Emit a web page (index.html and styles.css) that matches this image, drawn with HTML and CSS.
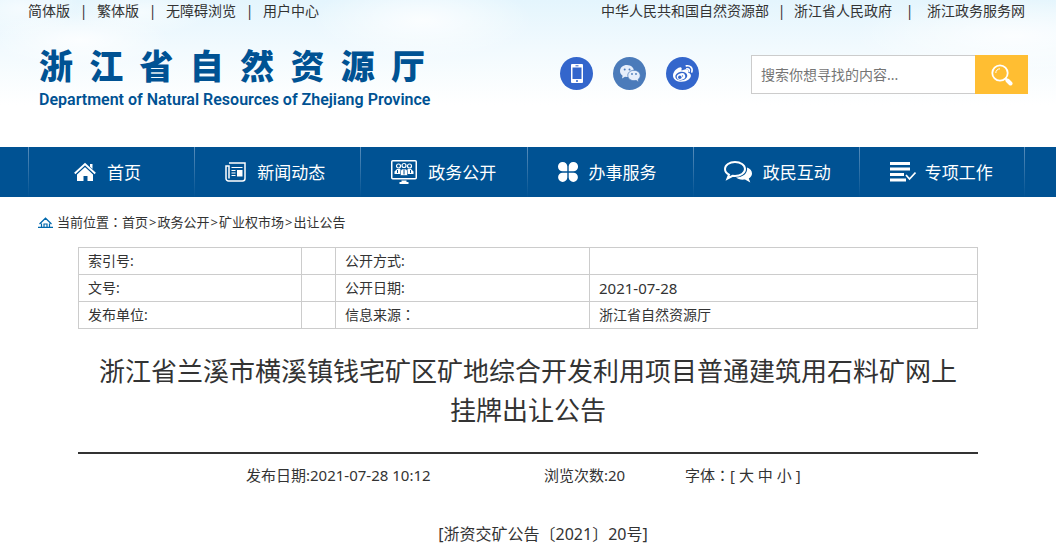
FILE: index.html
```html
<!DOCTYPE html>
<html lang="zh-CN">
<head>
<meta charset="utf-8">
<meta name="viewport" content="width=device-width, initial-scale=1">
<title>浙江省自然资源厅</title>
<link rel="stylesheet" href="styles.css">
</head>
<body>
<header class="header">
  <div class="container">
    <div class="topbar">
      <div class="topbar-group">
        <a href="#">简体版</a><span>|</span><a href="#">繁体版</a><span>|</span><a href="#">无障碍浏览</a><span>|</span><a href="#">用户中心</a>
      </div>
      <div class="topbar-group">
        <a href="#">中华人民共和国自然资源部</a><span class="narrow">|</span><a href="#">浙江省人民政府</a><span class="wide">|</span><a href="#">浙江政务服务网</a>
      </div>
    </div>
    <div class="brand-row">
      <a class="brand" href="#">
        <span class="brand-name">浙江省自然资源厅</span>
        <span class="brand-en">Department of Natural Resources of Zhejiang Province</span>
      </a>
      <div class="social">
        <a href="#" aria-label="手机版">
          <svg width="33" height="33" viewBox="0 0 33 33"><circle cx="16.500" cy="16.500" r="16.500" fill="#3366cc"/><rect x="11" y="7" width="12" height="19" rx="1" fill="#fff"/><rect x="12.500" y="10.500" width="9" height="11.500" fill="#3366cc"/><circle cx="17" cy="24" r="1" fill="#3366cc"/><path d="M15.500 8.800h3" stroke="#3366cc"/></svg>
        </a>
        <a href="#" aria-label="微信">
          <svg width="33" height="33" viewBox="0 0 33 33"><circle cx="16.500" cy="16.500" r="16.500" fill="#4b7bba"/><path d="M14 8c-4 0-7 2.600-7 6 0 2 1 3.600 2.600 4.700L9 21.500l3-1.700 2 .3c4 0 7-2.700 7-6S18 8 14 8z" fill="#e6eefb"/><path d="M21 13.300c-3.600 0-6.200 2.300-6.200 5.200s2.700 5.200 6.200 5.200l2-.3 2.900 1.500-.7-2.500c1.300-1 2-2.300 2-3.900 0-2.900-2.700-5.200-6.200-5.200z" fill="#e6eefb" stroke="#4b7bba" stroke-width=".8"/><g fill="#4b7bba"><circle cx="11.700" cy="12.500" r="1"/><circle cx="16.500" cy="12.500" r="1"/><circle cx="19" cy="17" r=".9"/><circle cx="23" cy="17" r=".9"/></g></svg>
        </a>
        <a href="#" aria-label="微博">
          <svg width="33" height="33" viewBox="0 0 33 33"><circle cx="16.500" cy="16.500" r="16.500" fill="#3366cc"/><path d="M15.500 12.500c.8-2-.5-3-3-1.800C9.500 12.200 7 15.500 7 18.700c0 3.700 4 6.100 8.600 6.100 5.400 0 9.300-3.200 9.300-6.200 0-2-1.600-2.800-2.800-3.200.9-2.400-.5-3.400-3.200-3-1.200.2-2.300.7-3.400 1z" fill="#fff"/><ellipse cx="15.300" cy="19.100" rx="6" ry="4.300" transform="rotate(-8 15.300 19.100)" fill="#3366cc"/><ellipse cx="15" cy="19.600" rx="4.300" ry="3.300" transform="rotate(-15 15 19.600)" fill="#fff"/><circle cx="13.800" cy="20.300" r="1.700" fill="#3366cc"/><circle cx="16.500" cy="18.900" r=".7" fill="#3366cc"/><path d="M20.300 8.900c3.800-.9 6.800 2.200 5.500 6M20.800 11.800c1.800-.3 3 .9 2.400 2.500" fill="none" stroke="#fff" stroke-width="1.600" stroke-linecap="round"/></svg>
        </a>
      </div>
      <form class="search">
        <input type="text" aria-label="搜索" placeholder="搜索你想寻找的内容...">
        <button type="button" aria-label="搜索">
          <svg width="22" height="22" viewBox="0 0 22 22" fill="none" stroke="#fff"><circle cx="9" cy="9" r="7.700" stroke-width="1.800"/><path d="M4.800 9A4.200 4.200 0 0 1 9 4.800" stroke-width="1"/><path d="M14.500 14.500l2 2" stroke-width="2"/><path d="M16.500 16.500l3 3" stroke-width="4" stroke-linecap="round"/></svg>
        </button>
      </form>
    </div>
  </div>
</header>

<nav class="nav">
  <div class="container nav-list">
    <a class="nav-item nav-home" href="#">
      <svg width="22" height="20" viewBox="0 0 22 20"><path d="M16 2h2.500v5L16 4.700z" fill="#fff"/><path d="M.8 11.500L11 2l10.200 9.500" fill="none" stroke="#fff" stroke-width="2"/><path d="M11 5l8 7.500V19h-5.500v-5h-4v5H3v-6.500z" fill="#fff"/><path d="M2 12.700l9-8.400 9 8.400" fill="none" stroke="#005293" stroke-width=".8"/></svg>
      <span>首页</span>
    </a>
    <a class="nav-item" href="#">
      <svg width="21" height="20" viewBox="0 0 21 20" fill="none" stroke="#fff" stroke-width="1.500"><path d="M4 1h16v15.500a2.500 2.500 0 0 1-2.500 2.500H3.500A2.500 2.500 0 0 1 1 16.500V4h3v12.500"/><path d="M6.500 5.500h11M6.500 8.500h4M6.500 11h4M6.500 13.500h4" stroke-width="1.200"/><path d="M12 8h5.500v6.500H12z" fill="#fff" stroke="none"/></svg>
      <span>新闻动态</span>
    </a>
    <a class="nav-item" href="#">
      <svg width="26" height="24" viewBox="0 0 26 24"><rect x=".75" y=".75" width="24.500" height="18" rx="1" fill="none" stroke="#fff" stroke-width="1.500"/><path d="M10.500 20.500h5v1.500h2v2h-9v-2h2z" fill="#fff"/><g fill="none" stroke="#fff" stroke-width="1.200"><circle cx="7.500" cy="6" r="2"/><circle cx="13" cy="5.500" r="2"/><circle cx="18.500" cy="6" r="2"/></g><path d="M3.500 14V11.500L6 9h3l1.500 2V14zM15.500 14V11L17 9h3l2.500 2.500V14z" fill="#fff"/><path d="M9.500 15.500v-5L11.500 9h3l2 1.500v5z" fill="#fff" stroke="#005293" stroke-width=".6"/><path d="M13 9.500v5M6.500 10v3M19.500 10v3" stroke="#005293"/></svg>
      <span>政务公开</span>
    </a>
    <a class="nav-item" href="#">
      <svg width="20" height="20" viewBox="0 0 20 20" fill="#fff"><path d="M4.700 0A4.600 4.600 0 0 1 9.300 4.600v4.700H4.600A4.600 4.600 0 0 1 4.700 0zM15.400 0a4.600 4.600 0 0 1 0 9.300h-4.700V4.600A4.600 4.600 0 0 1 15.400 0zM4.600 10.700h4.700v4.700a4.600 4.600 0 1 1-4.700-4.700zM10.700 10.700h4.700a4.600 4.600 0 1 1-4.700 4.700z"/></svg>
      <span>办事服务</span>
    </a>
    <a class="nav-item" href="#">
      <svg width="28" height="22" viewBox="0 0 28 22"><path d="M11 1C5.500 1 1 4 1 8c0 2.500 1.600 4.500 4 5.700L3.500 17.500 8.600 14.800l2.400.2c5.500 0 10-3 10-7s-4.500-7-10-7z" fill="none" stroke="#fff" stroke-width="2"/><path d="M23 6.500c3 1 5 3.200 5 6 0 2.200-1.200 3.800-3.200 5l1.500 4-5.300-3c-4.300.5-7.400-.5-9-2C18.800 16.200 24 12.500 23 6.500z" fill="#fff"/></svg>
      <span>政民互动</span>
    </a>
    <a class="nav-item" href="#">
      <svg width="26" height="20" viewBox="0 0 26 20"><path d="M0 1.500h20M0 7h20M0 12.500h14M0 18h16" fill="none" stroke="#fff" stroke-width="3"/><path d="M16 13l3.500 4 6-6.500" fill="none" stroke="#fff" stroke-width="1.700"/></svg>
      <span>专项工作</span>
    </a>
  </div>
</nav>

<main class="container">
  <div class="crumbs">
    <svg width="15" height="11" viewBox="0 0 15 11" fill="none" stroke="#0068ad" stroke-width="1.200"><path d="M1.500 7l6-5.800 6 5.800M3.500 6.500V10M11.500 6.500V10M0 10.400h15M6 10V7h3v3"/></svg>
    <span>当前位置<span class="colon" lang="zh-TW">：</span><a href="#">首页</a><span class="sep">&gt;</span><a href="#">政务公开</a><span class="sep">&gt;</span><a href="#">矿业权市场</a><span class="sep">&gt;</span><a href="#">出让公告</a></span>
  </div>
  <article class="article">
    <table class="info">
      <colgroup><col class="c1"><col class="c2"><col class="c3"><col></colgroup>
      <tr><th>索引号:</th><td></td><th>公开方式:</th><td></td></tr>
      <tr><th>文号:</th><td></td><th>公开日期:</th><td class="date">2021-07-28</td></tr>
      <tr><th>发布单位:</th><td></td><th>信息来源<span class="colon" lang="zh-TW">：</span></th><td>浙江省自然资源厅</td></tr>
    </table>
    <h1>浙江省兰溪市横溪镇钱宅矿区矿地综合开发利用项目普通建筑用石料矿网上挂牌出让公告</h1>
    <div class="meta">
      <span class="published">发布日期:2021-07-28 10:12</span>
      <span class="views">浏览次数:20</span>
      <span>字体<span class="colon" lang="zh-TW">：</span>[ <a href="#">大</a> <a href="#">中</a> <a href="#">小</a> ]</span>
    </div>
    <p class="doc-number">[浙资交矿公告〔2021〕20号]</p>
  </article>
</main>
</body>
</html>
```

FILE: styles.css
```css
* { box-sizing: border-box; }

body {
  margin: 0;
  background: #fff;
  color: #333;
  font: 14px/20px "Noto Sans", "Noto Sans CJK SC", sans-serif;
}

a { color: inherit; text-decoration: none; }
svg { display: block; flex: none; }
.colon { font-family: "Noto Sans CJK TC", sans-serif; line-height: 1; }
.container { max-width: 1000px; margin: 0 auto; }

.header {
  height: 147px;
  background:
    radial-gradient(ellipse 90px 28px at 80px 40px, #fffc, transparent),
    radial-gradient(ellipse 60px 30px at 20px 8px, #fff9, transparent),
    radial-gradient(ellipse 70px 24px at 140px 12px, #fff9, transparent),
    radial-gradient(ellipse 110px 40px at 40% 20px, #fffc, transparent),
    radial-gradient(ellipse 160px 40px at 96% 36px, #fffc, transparent),
    linear-gradient(#e4f5fd, #f2fafe 50px, #fff 105px);
}

.topbar { display: flex; justify-content: space-between; padding: 1px 3px 0 0; }
.topbar-group { display: flex; }
.topbar-group span { width: 27px; text-align: center; }
.topbar-group .narrow { width: 25px; }
.topbar-group .wide { width: 35px; }

.brand-row { display: flex; align-items: flex-start; padding: 23px 0 0 11px; }
.brand { display: block; width: 386px; color: #005293; }
.brand-name {
  display: block;
  font-size: 34px;
  font-weight: 900;
  line-height: 45px;
  text-align: justify;
  text-align-last: justify;
}
.brand-en {
  display: block;
  font: 600 16px/22px Roboto, sans-serif;
  white-space: nowrap;
}
.social { display: flex; gap: 20px; margin: 13px 0 0 auto; }
.search { display: flex; width: 277px; height: 39px; margin: 11px 0 0 52px; }
.search input {
  flex: 1;
  min-width: 0;
  padding: 0 9px;
  border: 1px solid #ccc;
  border-right: 0;
  background: #fff;
  color: #333;
  font: inherit;
}
.search input::placeholder { color: #757575; }
.search button {
  display: flex;
  align-items: center;
  width: 53px;
  padding: 0 16px;
  border: 0;
  background: #ffbe32;
}

.nav { background: #005293; color: #fff; }
.nav-list { display: grid; grid-template-columns: repeat(6, 1fr); padding-right: 3px; }
.nav-item {
  display: flex;
  align-items: center;
  gap: 11px;
  height: 50px;
  padding: 2px 0 0 30px;
  border-left: 1px solid;
  border-image: linear-gradient(#5a8fbc, #1a639e 70%, #005293) 1;
  font-size: 17px;
  white-space: nowrap;
}
.nav-item:last-child { border-right: 1px solid; gap: 9px; }
.nav-home { padding-left: 45px; }
.nav-item svg { margin-bottom: 3px; }

.crumbs { display: flex; align-items: center; gap: 4px; padding: 15px 0 15px 10px; font-size: 13px; }
.sep { padding: 0 1px; }

.article { max-width: 900px; margin: 0 auto; }
.info { width: 100%; border-collapse: collapse; table-layout: fixed; }
.c1 { width: 223px; }
.c2 { width: 34px; }
.c3 { width: 254px; }
.info th, .info td {
  height: 27px;
  padding: 0 9px;
  border: 1px solid #ccc;
  font-weight: normal;
  text-align: left;
}
.info .date { font-size: 15px; }

h1 {
  margin: 23px 0 22px;
  padding: 0 20px;
  font-size: 26px;
  font-weight: normal;
  line-height: 39px;
  text-align: center;
}
.meta { display: flex; padding: 11px 0 0 168px; border-top: 2px solid #333; font-size: 15px; white-space: nowrap; }
.published { width: 298px; }
.views { width: 141px; }
.doc-number { margin: 0; padding: 39px 0 12px 30px; font-size: 16px; text-align: center; }
```
